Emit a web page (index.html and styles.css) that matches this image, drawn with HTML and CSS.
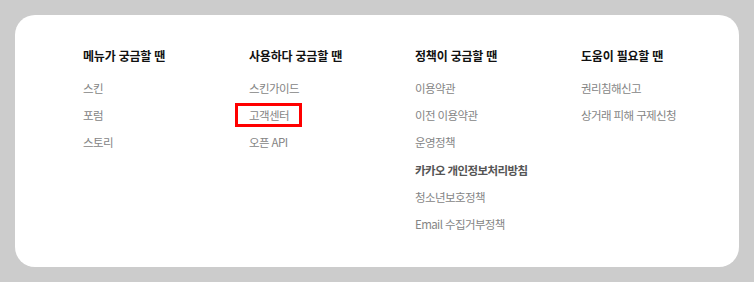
FILE: index.html
```html
<!DOCTYPE html>
<html lang="ko">
<head>
  <meta charset="UTF-8">
  <title>Footer links</title>
  <link rel="stylesheet" href="styles.css">
</head>
<body>
  <div class="footer-card">
    <div class="link-group">
      <h3>메뉴가 궁금할 땐</h3>
      <ul>
        <li><a href="#">스킨</a></li>
        <li><a href="#">포럼</a></li>
        <li><a href="#">스토리</a></li>
      </ul>
    </div>
    <div class="link-group">
      <h3>사용하다 궁금할 땐</h3>
      <ul>
        <li><a href="#">스킨가이드</a></li>
        <li><a href="#" class="marked">고객센터</a></li>
        <li><a href="#">오픈 API</a></li>
      </ul>
    </div>
    <div class="link-group">
      <h3>정책이 궁금할 땐</h3>
      <ul>
        <li><a href="#">이용약관</a></li>
        <li><a href="#">이전 이용약관</a></li>
        <li><a href="#">운영정책</a></li>
        <li><a href="#" class="strong">카카오 개인정보처리방침</a></li>
        <li><a href="#">청소년보호정책</a></li>
        <li><a href="#">Email 수집거부정책</a></li>
      </ul>
    </div>
    <div class="link-group">
      <h3>도움이 필요할 땐</h3>
      <ul>
        <li><a href="#">권리침해신고</a></li>
        <li><a href="#">상거래 피해 구제신청</a></li>
      </ul>
    </div>
  </div>
</body>
</html>
```

FILE: styles.css
```css
/* page */
body {
  margin: 0;
  padding: 15px;
  background-color: #cccccc;
  font-family: "Noto Sans CJK KR", "Noto Sans", sans-serif;
}

.footer-card {
  display: grid;
  grid-template-columns: repeat(4, 166px);
  width: 724px;
  height: 252px;
  box-sizing: border-box;
  padding: 31px 0 0 68px;
  background-color: white;
  border-radius: 20px;
}

.link-group h3 {
  margin: 0 0 10px;
  font-size: 12px;
  line-height: 20px;
  letter-spacing: -0.2px;
  font-weight: bold;
  color: #111;
}

.link-group ul {
  list-style-type: none;
  margin: 0;
  padding: 0;
}

.link-group li {
  height: 27.2px;
  line-height: 20px;
}

.link-group a {
  text-decoration: none;
  font-size: 11.5px;
  letter-spacing: -0.6px;
  color: #858585;
}

.link-group a.strong {
  font-weight: bold;
  color: #555;
}

/* red annotation box */
.link-group a.marked {
  position: relative;
}

.link-group a.marked::after {
  content: "";
  position: absolute;
  left: -14px;
  right: -13px;
  top: -4px;
  bottom: -4px;
  border: 3px solid #ff0000;
}
```
